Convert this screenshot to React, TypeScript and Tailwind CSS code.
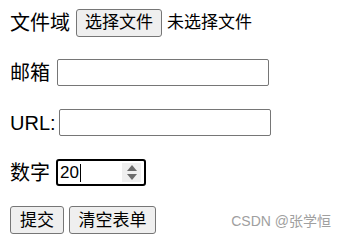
import React from 'react';

const font = "font-['Liberation_Sans','Noto_Sans_CJK_SC',sans-serif]";

const TextBox: React.FC<{ w: string }> = ({ w }) => (
  <input
    type="text"
    className={`${w} h-[27px] border border-[#767676] rounded-[2px] bg-white outline-none px-1 text-[16px]`}
  />
);

const Btn: React.FC<{ label: string; w: string }> = ({ label, w }) => (
  <button
    className={`${w} h-[28px] border border-[#767676] rounded-[3px] bg-[#efefef] text-[17px] leading-none text-black flex items-center justify-center`}
  >
    {label}
  </button>
);

const App: React.FC = () => {
  return (
    <div className={`w-[345px] h-[243px] bg-white text-black ${font} pl-[10px] pt-[9px] flex flex-col`}>
      {/* 文件域 */}
      <div className="flex items-center h-[27px] text-[20px] leading-none">
        <span>文件域</span>
        <Btn label="选择文件" w="w-[86px] ml-[6px]" />
        <span className="ml-[5px] text-[17px]">未选择文件</span>
      </div>

      <div className="flex items-center h-[27px] mt-[23px] text-[20px] leading-none">
        <span>邮箱</span>
        <div className="ml-[7px]">
          <TextBox w="w-[212px]" />
        </div>
      </div>

      <div className="flex items-center h-[27px] mt-[23px] text-[20px] leading-none">
        <span>URL:</span>
        <div className="ml-[3px]">
          <TextBox w="w-[212px]" />
        </div>
      </div>

      <div className="flex items-center h-[27px] mt-[23px] text-[20px] leading-none">
        <span>数字</span>
        <div className="ml-[6px] w-[90px] h-[27px] border-2 border-black rounded-[3px] bg-white flex items-center pl-[2px] pr-[3px]">
          <span className="text-[17px] leading-none">20</span>
          <span className="w-px h-[18px] bg-black ml-[1px]" />
          <div className="ml-auto w-[19px] h-[19px] bg-[#efefef] flex flex-col items-center justify-center gap-[3px]">
            <svg width="10" height="6" viewBox="0 0 10 6">
              <path d="M5 0 L10 6 L0 6 Z" fill="#6b6b6b" />
            </svg>
            <svg width="10" height="6" viewBox="0 0 10 6">
              <path d="M0 0 L10 0 L5 6 Z" fill="#6b6b6b" />
            </svg>
          </div>
        </div>
      </div>

      <div className="flex items-center h-[28px] mt-[20px] pr-[14px]">
        <Btn label="提交" w="w-[54px]" />
        <Btn label="清空表单" w="w-[87px] ml-[5px]" />
        <span className="ml-auto mt-[2px] text-[14px] text-[#a0a0a0] leading-none">CSDN @张学恒</span>
      </div>
    </div>
  );
};

export default App;
